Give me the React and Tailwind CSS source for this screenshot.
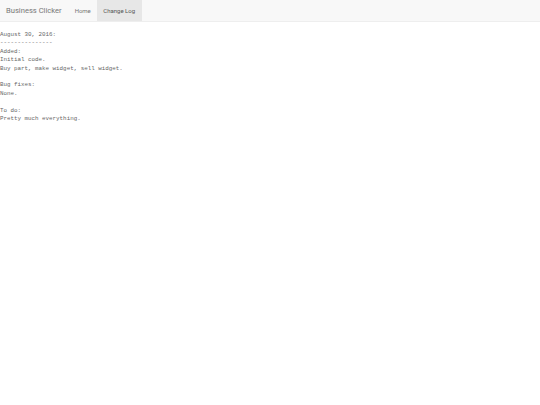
import React from "react";

const changeLog = `August 30, 2016:
---------------
Added:
Initial code.
Buy part, make widget, sell widget.

Bug fixes:
None.

To do:
Pretty much everything.`;

export default function App() {
  return (
    <div className="min-h-screen w-full bg-white font-['Roboto','Liberation_Sans',sans-serif]">
      <nav className="flex h-[22px] items-stretch border-b border-[#eeeeee] bg-[#f8f8f8]">
        <a className="flex items-center px-[6px] text-[7.6px] text-[#777]">Business Clicker</a>
        <ul className="ml-[1px] flex items-stretch">
          <li className="flex items-center px-[6px] text-[6px] text-[#777]">Home</li>
          <li className="flex items-center bg-[#e7e7e7] px-[6.5px] text-[6px] text-[#555]">Change Log</li>
        </ul>
      </nav>
      <pre className="mt-[9px] font-['Liberation_Mono',monospace] text-[5.85px] leading-[8.4px] text-[#666]">
        {changeLog}
      </pre>
    </div>
  );
}
